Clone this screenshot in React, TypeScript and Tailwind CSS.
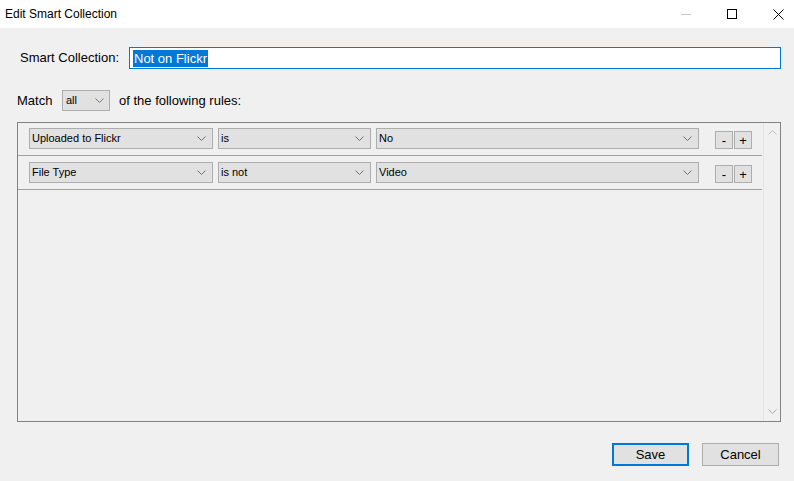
const font = { fontFamily: '"Segoe UI", "Liberation Sans", Arial, sans-serif' };

function Chevron({ className = "" }: { className?: string }) {
  return (
    <svg width="9" height="6" viewBox="0 0 9 6" className={className}>
      <path d="M0.5 0.5 L4.5 4.5 L8.5 0.5" fill="none" stroke="currentColor" strokeWidth="1" />
    </svg>
  );
}

function Select({ value, w }: { value: string; w: string }) {
  return (
    <div
      className={`${w} h-[21px] shrink-0 flex items-center justify-between border border-[#adadad] bg-[#e1e1e1] pl-[2px] pr-[6px] text-[11px] text-black`}
    >
      <span className="leading-none">{value}</span>
      <Chevron className="text-[#707070]" />
    </div>
  );
}

function SmallBtn({ label }: { label: string }) {
  return (
    <div className="w-[18px] h-[18px] flex items-center justify-center border border-[#adadad] bg-[#e1e1e1] text-[13px] leading-none text-black">
      {label}
    </div>
  );
}

function Rule({ a, b, c, first }: { a: string; b: string; c: string; first?: boolean }) {
  return (
    <div className="flex flex-col">
      <div className={`${first ? "h-[32px] pt-[5px]" : "h-[33px] pt-[6px]"} flex items-start pl-[11px]`}>
        <Select value={a} w="w-[184px]" />
        <div className="w-[5px]" />
        <Select value={b} w="w-[153px]" />
        <div className="w-[5px]" />
        <Select value={c} w="w-[323px]" />
        <div className="ml-[16px] mt-[3px] flex gap-[1px]">
          <SmallBtn label="-" />
          <SmallBtn label="+" />
        </div>
      </div>
      <div className="h-px mr-px bg-[#a0a0a0]" />
    </div>
  );
}

export default function App() {
  return (
    <div className="w-[794px] h-[481px] overflow-hidden bg-[#f0f0f0] flex flex-col text-[13px] text-black" style={font}>
      {/* title bar */}
      <div className="h-[28px] bg-white flex items-center text-[12px]">
        <span className="pl-[5px] flex-1">Edit Smart Collection</span>
        <div className="flex items-center h-full -mr-[7px]">
          <div className="w-[46px] h-full flex items-center justify-center">
            <div className="w-[10px] h-px bg-[#c8c8c8]" />
          </div>
          <div className="w-[46px] h-full flex items-center justify-center">
            <div className="w-[10px] h-[10px] border border-black" />
          </div>
          <div className="w-[46px] h-full flex items-center justify-center">
            <svg width="11" height="11" viewBox="0 0 11 11">
              <path d="M0.5 0.5 L10.5 10.5 M10.5 0.5 L0.5 10.5" stroke="black" strokeWidth="1" />
            </svg>
          </div>
        </div>
      </div>

      {/* name */}
      <div className="mt-[19px] h-[22px] flex items-center">
        <span className="w-[120px] text-right pr-px">Smart Collection:</span>
        <div className="ml-[9px] w-[652px] h-[22px] border border-[#0078d7] bg-white flex items-center pl-[3px]">
          <span className="bg-[#0078d7] text-white leading-[17px] px-px">Not on Flickr</span>
        </div>
      </div>

      {/* match */}
      <div className="mt-[21px] h-[21px] flex items-center">
        <span className="pl-[17px] w-[62px]">Match</span>
        <div className="w-[48px] h-[21px] flex items-center justify-between border border-[#adadad] bg-[#e1e1e1] pl-[3px] pr-[5px] text-[11px]">
          <span>all</span>
          <Chevron className="text-[#707070]" />
        </div>
        <span className="pl-[9px]">of the following rules:</span>
      </div>

      {/* rules box */}
      <div className="mt-[11px] ml-[17px] w-[764px] h-[300px] border border-[#828282] flex">
        <div className="flex-1 flex flex-col">
          <Rule a="Uploaded to Flickr" b="is" c="No" first />
          <Rule a="File Type" b="is not" c="Video" />
        </div>
        <div className="w-[17px] border-l border-[#e4e4e4] flex flex-col items-center justify-between py-[6px]">
          <Chevron className="text-[#c0c0c0] rotate-180" />
          <Chevron className="text-[#a6a6a6]" />
        </div>
      </div>

      {/* buttons */}
      <div className="mt-[21px] flex justify-end gap-[13px] pr-[15px]">
        <div className="w-[77px] h-[23px] border-2 border-[#0078d7] bg-[#e1e1e1] flex items-center justify-center">
          Save
        </div>
        <div className="w-[77px] h-[23px] border border-[#adadad] bg-[#e1e1e1] flex items-center justify-center">
          Cancel
        </div>
      </div>
    </div>
  );
}
